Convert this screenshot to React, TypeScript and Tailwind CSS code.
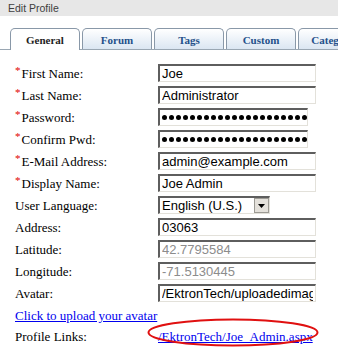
import React from 'react';

const tabs = ['General', 'Forum', 'Tags', 'Custom', 'Category'];

type Row = {
  label: string;
  required?: boolean;
  value?: string;
  kind?: 'text' | 'password' | 'select' | 'disabled';
};

const rows: Row[] = [
  { label: 'First Name:', required: true, value: 'Joe' },
  { label: 'Last Name:', required: true, value: 'Administrator' },
  { label: 'Password:', required: true, kind: 'password' },
  { label: 'Confirm Pwd:', required: true, kind: 'password' },
  { label: 'E-Mail Address:', required: true, value: 'admin@example.com' },
  { label: 'Display Name:', required: true, value: 'Joe Admin' },
  { label: 'User Language:', value: 'English (U.S.)', kind: 'select' },
  { label: 'Address:', value: '03063' },
  { label: 'Latitude:', value: '42.7795584', kind: 'disabled' },
  { label: 'Longitude:', value: '-71.5130445', kind: 'disabled' },
  { label: 'Avatar:', value: '/EktronTech/uploadedimages/thumb_joe.png' },
];

const boxCls =
  'h-[18px] border-t-2 border-l-2 border-b border-r border-t-[#5e5e5e] border-l-[#5e5e5e] border-b-[#e3e1da] border-r-[#e3e1da] bg-white px-[2px] text-[13px] leading-[14px] outline-none overflow-hidden whitespace-nowrap font-["Liberation_Sans",Arial,sans-serif]';

const Field = ({ row }: { row: Row }) => {
  if (row.kind === 'select') {
    return (
      <div className={`${boxCls} w-[112px] flex items-center justify-between pr-0`}>
        <span className="text-black">{row.value}</span>
        <span className="w-[15px] h-[15px] bg-[#e4e1db] border border-[#9c9a94] flex items-center justify-center">
          <svg width="7" height="4" viewBox="0 0 7 4">
            <path d="M0 0h7L3.5 4z" fill="#000" />
          </svg>
        </span>
      </div>
    );
  }
  if (row.kind === 'password') {
    // dots drawn as shapes, the last one clipped like the original
    return (
      <div className={`${boxCls} w-[150px] flex items-center gap-[2px] pl-[2px]`}>
        {Array.from({ length: 22 }).map((_, i) => (
          <span key={i} className="w-[5px] h-[5px] shrink-0 rounded-full bg-black" />
        ))}
      </div>
    );
  }
  return (
    <input
      readOnly
      type="text"
      value={row.value}
      className={`${boxCls} w-[158px] ${row.kind === 'disabled' ? 'text-[#8c8c8c]' : 'text-black'}`}
    />
  );
};

export default function App() {
  return (
    <div className="w-[338px] h-[352px] overflow-hidden bg-white font-['Liberation_Serif',serif]">
      <div className="h-[16px] bg-[#e7e7e7] pl-[8px] text-[10.5px] leading-[16px] text-[#404040] font-['Liberation_Sans',Arial,sans-serif]">
        Edit Profile
      </div>

      <div className="mt-[12px] flex gap-[2px] pl-[10px] border-b border-[#9aa7b3] w-[400px]">
        {tabs.map((t, i) => (
          <div
            key={t}
            className={`w-[70px] shrink-0 h-[21px] rounded-t-[5px] border border-b-0 border-[#8998a8] text-center text-[11px] font-bold leading-[22px] ${
              i === 0
                ? 'bg-white text-[#1f1f1f] h-[22px] -mb-px'
                : 'bg-gradient-to-b from-white to-[#dbe6f2] text-[#24508a]'
            }`}
          >
            {t}
          </div>
        ))}
      </div>

      <div className="mt-[12px] pl-[15px] text-[13px] text-black">
        {rows.map((r) => (
          <div key={r.label} className="h-[22px] flex items-center">
            <div className="w-[143px] flex items-center leading-none">
              {r.required && <span className="text-[#e00000] text-[11px] -mt-[5px] mr-[1px]">*</span>}
              <span>{r.label}</span>
            </div>
            <Field row={r} />
          </div>
        ))}
        <div className="h-[24px] flex items-center">
          <a href="#" className="text-[#0000ee] underline">
            Click to upload your avatar
          </a>
        </div>
        <div className="h-[17px] flex items-center">
          <div className="w-[143px]">Profile Links:</div>
          <div className="relative">
            <a href="#" className="text-[#0000ee] underline">
              /EktronTech/Joe_Admin.aspx
            </a>
            <svg
              className="absolute left-[-11px] top-[-9px]"
              width="172"
              height="29"
              viewBox="0 0 172 29"
            >
              <ellipse cx="86" cy="14.5" rx="84.5" ry="13" fill="none" stroke="#e01010" strokeWidth="2" />
            </svg>
          </div>
        </div>
      </div>
    </div>
  );
}
